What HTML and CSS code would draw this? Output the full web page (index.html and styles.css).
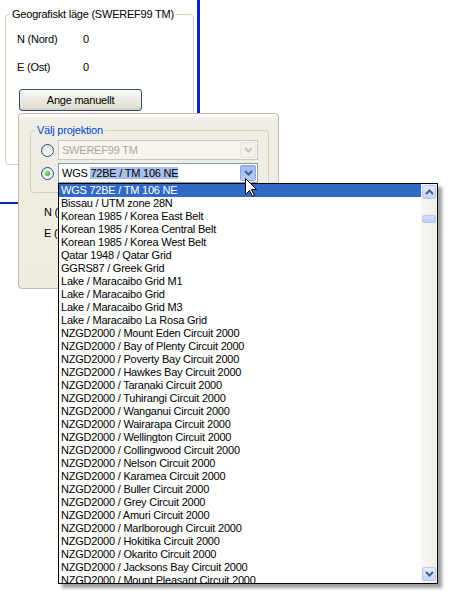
FILE: index.html
```html
<!DOCTYPE html>
<html lang="sv">
<head>
<meta charset="utf-8">
<title>Välj projektion</title>
<link rel="stylesheet" href="styles.css">
</head>
<body>
<div class="window">
  <fieldset class="group geo">
    <legend>Geografiskt läge (SWEREF99 TM)</legend>
    <div class="geo-body">
      <div class="row"><span class="lbl">N (Nord)</span><span>0</span></div>
      <div class="row"><span class="lbl">E (Ost)</span><span>0</span></div>
      <button class="btn">Ange manuellt</button>
    </div>
  </fieldset>
</div>

<div class="popup">
  <fieldset class="group proj">
    <legend>Välj projektion</legend>
    <div class="proj-body">
      <div class="opt">
        <span class="radio"></span>
        <div class="combo disabled">
          <span class="ctext">SWEREF99 TM</span>
          <span class="cbtn"><svg width="9" height="6" viewBox="0 0 9 6"><path d="M1 1 L4.5 4.5 L8 1" fill="none" stroke="currentColor" stroke-width="2"/></svg></span>
        </div>
      </div>
      <div class="opt">
        <span class="radio checked"><span class="dot"></span></span>
        <div class="combo">
          <span class="ctext">WGS <span class="hl">72BE / TM 106 NE</span></span>
          <span class="cbtn pressed"><svg width="9" height="6" viewBox="0 0 9 6"><path d="M1 1 L4.5 4.5 L8 1" fill="none" stroke="currentColor" stroke-width="2"/></svg></span>
        </div>
      </div>
    </div>
  </fieldset>
  <div class="prow">N (Nord)</div>
  <div class="prow">E (Ost)</div>
</div>

<div class="dropdown">
  <ul class="items">
    <li class="sel">WGS 72BE / TM 106 NE</li>
    <li>Bissau / UTM zone 28N</li>
    <li>Korean 1985 / Korea East Belt</li>
    <li>Korean 1985 / Korea Central Belt</li>
    <li>Korean 1985 / Korea West Belt</li>
    <li>Qatar 1948 / Qatar Grid</li>
    <li>GGRS87 / Greek Grid</li>
    <li>Lake / Maracaibo Grid M1</li>
    <li>Lake / Maracaibo Grid</li>
    <li>Lake / Maracaibo Grid M3</li>
    <li>Lake / Maracaibo La Rosa Grid</li>
    <li>NZGD2000 / Mount Eden Circuit 2000</li>
    <li>NZGD2000 / Bay of Plenty Circuit 2000</li>
    <li>NZGD2000 / Poverty Bay Circuit 2000</li>
    <li>NZGD2000 / Hawkes Bay Circuit 2000</li>
    <li>NZGD2000 / Taranaki Circuit 2000</li>
    <li>NZGD2000 / Tuhirangi Circuit 2000</li>
    <li>NZGD2000 / Wanganui Circuit 2000</li>
    <li>NZGD2000 / Wairarapa Circuit 2000</li>
    <li>NZGD2000 / Wellington Circuit 2000</li>
    <li>NZGD2000 / Collingwood Circuit 2000</li>
    <li>NZGD2000 / Nelson Circuit 2000</li>
    <li>NZGD2000 / Karamea Circuit 2000</li>
    <li>NZGD2000 / Buller Circuit 2000</li>
    <li>NZGD2000 / Grey Circuit 2000</li>
    <li>NZGD2000 / Amuri Circuit 2000</li>
    <li>NZGD2000 / Marlborough Circuit 2000</li>
    <li>NZGD2000 / Hokitika Circuit 2000</li>
    <li>NZGD2000 / Okarito Circuit 2000</li>
    <li>NZGD2000 / Jacksons Bay Circuit 2000</li>
    <li>NZGD2000 / Mount Pleasant Circuit 2000</li>
  </ul>
  <div class="sb">
    <span class="sbtn"><svg width="9" height="6" viewBox="0 0 9 6"><path d="M1 5 L4.5 1.5 L8 5" fill="none" stroke="currentColor" stroke-width="2"/></svg></span>
    <span class="thumb"></span>
    <span class="sbtn down"><svg width="9" height="6" viewBox="0 0 9 6"><path d="M1 1 L4.5 4.5 L8 1" fill="none" stroke="currentColor" stroke-width="2"/></svg></span>
  </div>
</div>

<svg class="cursor" width="13" height="20" viewBox="0 0 13 20">
  <path d="M0.5 0.5 V16.5 L4.5 12.5 L7.5 18.5 L9.5 17.5 L6.5 11.5 H11.5 Z" fill="#fff" stroke="#000" stroke-width="1" stroke-linejoin="miter"/>
</svg>
</body>
</html>
```

FILE: styles.css
```css
* { box-sizing: border-box; }
html, body { margin: 0; padding: 0; background: #fff; }
body {
  position: relative;
  width: 450px;
  height: 594px;
  overflow: hidden;
  font-family: "Liberation Sans", Arial, sans-serif;
  font-size: 11px;
  letter-spacing: -0.22px;
  color: #000;
}

/* background window corner */
.window {
  width: 200px;
  height: 204px;
  border-right: 3px solid #0B27AE;
  border-bottom: 2px solid #0B27AE;
  padding: 8px 0 0 5px;
}

.group {
  margin: 0;
  padding: 0;
  min-width: 0;
  border: 1px solid #D0D0BF;
  border-radius: 4px;
}
.group legend {
  margin-left: 4px;
  padding: 0 2px;
  line-height: 13px;
  height: 13px;
}

.geo { width: 189px; height: 157px; }
.geo-body { padding: 12px 0 0 11px; }
.row { display: flex; height: 13px; line-height: 13px; }
.row + .row { margin-top: 15px; }
.lbl { width: 66px; }
.btn {
  display: block;
  margin: 15px 0 0 2px;
  width: 123px;
  height: 22px;
  padding: 0;
  font: inherit;
  letter-spacing: inherit;
  color: #000;
  border: 1px solid #33506F;
  border-radius: 3px;
  background: linear-gradient(#FBFBF8 0%, #EDEBE4 40%, #E3E0D7 85%, #D3CEC2 100%);
}

/* popup panel */
.popup {
  position: absolute;
  left: 18px;
  top: 113px;
  width: 261px;
  height: 176px;
  border: 1px solid #BDBBB0;
  border-radius: 4px;
  background: linear-gradient(#FDFDFB 0px, #F0EEE4 6px, #EEEBDF 100%);
  padding: 10px 0 0 11px;
}
.proj { width: 239px; height: 69px; }
.proj legend { color: #0046D5; }
.proj-body { padding: 3px 0 0 10px; }
.opt { display: flex; align-items: center; height: 20px; }
.opt + .opt { margin-top: 3px; }
.radio {
  width: 13px;
  height: 13px;
  border-radius: 50%;
  border: 1px solid #1C5180;
  background: linear-gradient(135deg, #DCDBD4 0%, #F4F3EE 60%, #FFFFFF 100%);
  display: flex;
  align-items: center;
  justify-content: center;
  margin-right: 4px;
  flex: none;
}
.radio .dot {
  width: 5px;
  height: 5px;
  border-radius: 50%;
  background: radial-gradient(circle at 35% 35%, #8FE08F, #21A121);
}
.combo {
  width: 200px;
  height: 20px;
  border: 1px solid #7F9DB9;
  background: #fff;
  display: flex;
  align-items: center;
  padding-left: 3px;
}
.ctext { white-space: nowrap; line-height: 13px; }
.hl { background: #A8C0EB; }
.combo.disabled { border-color: #C9C7BA; background: #F6F5EF; }
.combo.disabled .ctext { color: #ACA899; }
.cbtn {
  margin-left: auto;
  margin-right: 1px;
  width: 16px;
  height: 16px;
  border-radius: 2px;
  display: flex;
  align-items: center;
  justify-content: center;
  border: 1px solid #E6E5DE;
  background: #F1F0EA;
  color: #C9C7BA;
}
.cbtn.pressed {
  border-color: #8EA9E6;
  background: linear-gradient(#9FB8F2, #B7CBF8);
  color: #4D6185;
}
/* labels partly hidden by the open list: clip at the list's left edge */
.prow {
  padding-left: 14px;
  width: 39px;
  height: 13px;
  line-height: 13px;
  white-space: nowrap;
  overflow: hidden;
}
.prow:first-of-type { margin-top: 13px; }
.prow + .prow { margin-top: 8px; }

/* dropdown list */
.dropdown {
  position: absolute;
  left: 58px;
  top: 183px;
  width: 380px;
  height: 401px;
  border: 1px solid #000;
  background: #fff;
  display: flex;
  box-shadow: 4px 4px 3px rgba(0, 0, 0, 0.38);
}
.items {
  list-style: none;
  margin: 0;
  padding: 0;
  flex: 1;
  overflow: hidden;
}
.items li {
  height: 13px;
  line-height: 13px;
  padding-left: 2px;
  white-space: nowrap;
}
.items li.sel { background: #316AC5; color: #fff; }
.sb {
  width: 16px;
  display: flex;
  flex-direction: column;
  align-items: center;
  padding: 1px 0 2px;
  background: linear-gradient(to right, #F8F7F3, #EEEDE6);
}
.sbtn {
  width: 14px;
  height: 14px;
  border: 1px solid #B7CAF5;
  border-radius: 2px;
  background: linear-gradient(#E2EBFE, #C3D4FB);
  color: #4D6185;
  display: flex;
  align-items: center;
  justify-content: center;
}
.sbtn.down { margin-top: auto; }
.thumb {
  margin-top: 16px;
  width: 14px;
  height: 8px;
  border: 1px solid #B4C7F5;
  border-radius: 2px;
  background: linear-gradient(#CFDCFC, #BCCEFA);
}

.cursor {
  position: absolute;
  left: 245px;
  top: 178px;
}
```
